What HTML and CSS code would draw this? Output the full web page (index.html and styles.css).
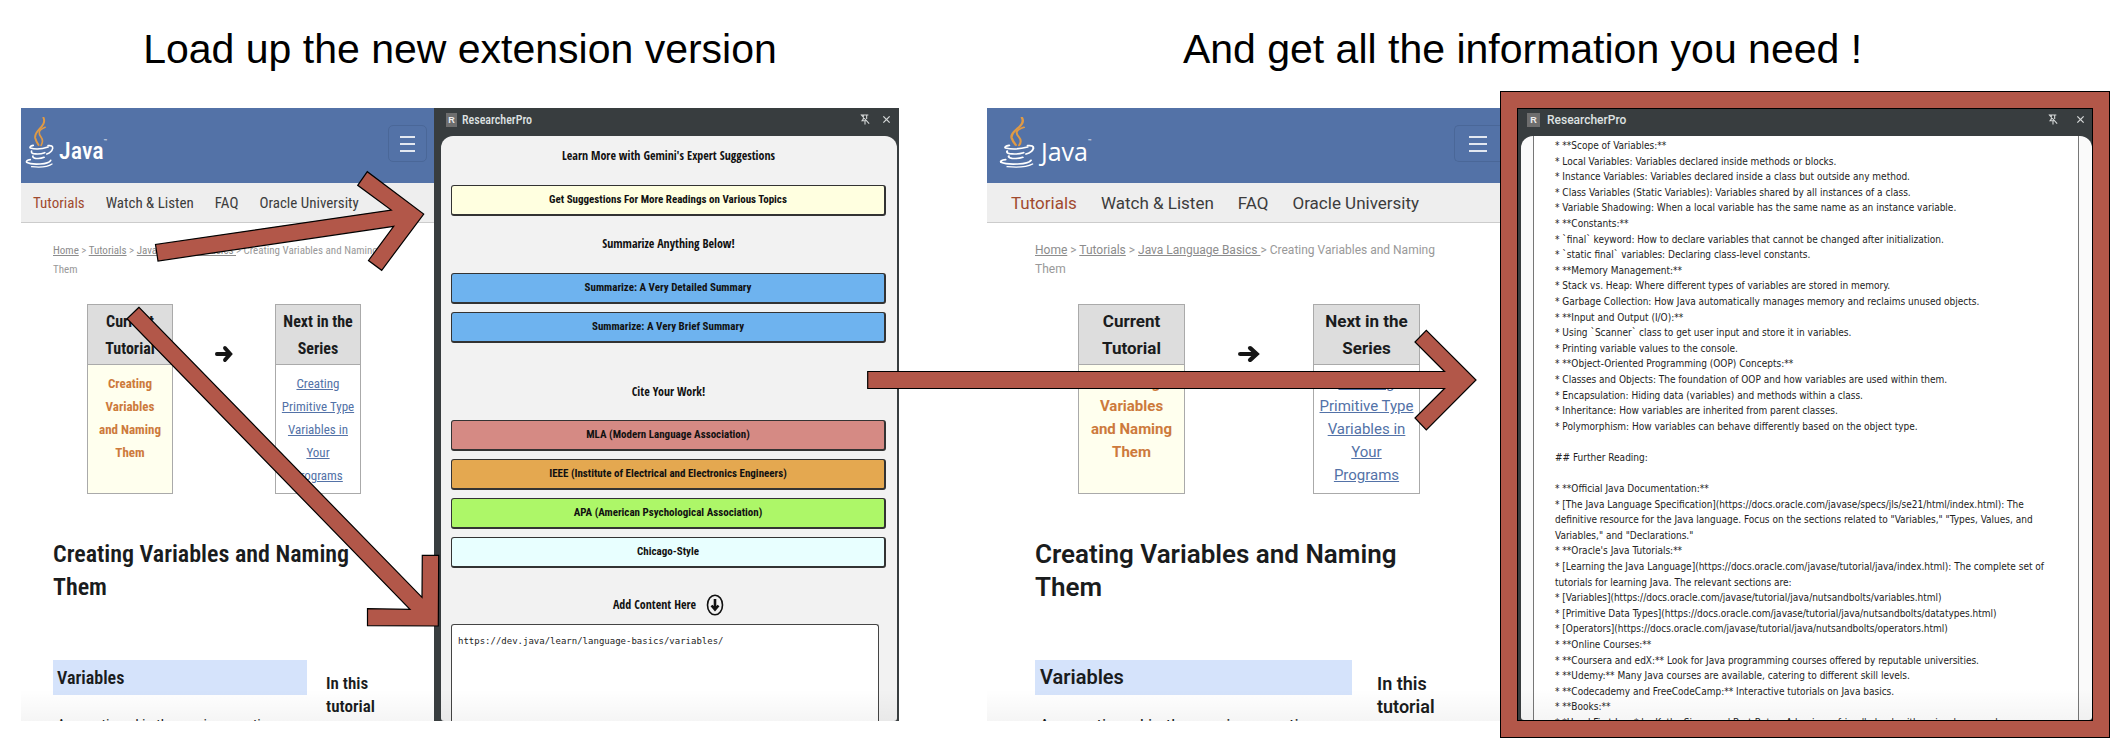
FILE: index.html
```html
<!DOCTYPE html>
<html lang="en">
<head>
<meta charset="utf-8">
<title>ResearcherPro walkthrough</title>
<link rel="stylesheet" href="styles.css">
</head>
<body>
<svg class="symbols" aria-hidden="true">
  <symbol id="cup" viewBox="72 78 88 156" preserveAspectRatio="none">
    <g fill="none" stroke="#e09a45" stroke-linecap="round">
      <path d="M128 80C140 106 98 118 103 141Q106 152 113 162" stroke-width="6"/>
      <path d="M133 109C110 118 113 128 121 139Q129 150 121 163" stroke-width="5"/>
    </g>
    <g fill="none" stroke="#fff" stroke-linecap="round" stroke-width="5">
      <path d="M97 163Q84 166 88 171Q112 178 142 168"/>
      <path d="M142 164Q157 162 156 172Q153 184 138 189"/>
      <path d="M92 180Q90 186 98 188Q116 191 132 185"/>
      <path d="M96 195Q94 200 104 202Q118 204 130 199"/>
      <path d="M88 206Q74 208 77 214Q90 221 118 219Q146 217 150 208"/>
      <path d="M92 227Q134 232 154 219" stroke-width="4"/>
    </g>
  </symbol>
  <symbol id="next" viewBox="0 0 20 18" preserveAspectRatio="none">
    <path d="M2 9H16M11 3L17 9L11 15" fill="none" stroke="#151515" stroke-width="4" stroke-linecap="round"/>
  </symbol>
  <symbol id="unpin" viewBox="0 0 12 14">
    <path d="M2 1.5H10M4 2V6.5L2.5 8.5H7M8 2V6.5M6 8.5V13M1 1L11 12" fill="none" stroke="#d5d8d8" stroke-width="1.3"/>
  </symbol>
  <symbol id="close" viewBox="0 0 10 10">
    <path d="M1.500 1.500L8.500 8.500M8.500 1.500L1.500 8.500" fill="none" stroke="#d5d8d8" stroke-width="1.400"/>
  </symbol>
</svg>
<main class="board">
  <figure class="step step-load">
    <figcaption class="title">Load up the new extension version</figcaption>
    <div class="shot">
      <section class="page narrow">
        <header class="site-head">
          <a class="logo"><svg class="cup"><use href="#cup"/></svg><span class="logo-name">Java</span><sup class="tm">™</sup></a>
          <button class="menu" aria-label="Menu"><span class="bar"></span><span class="bar"></span><span class="bar"></span></button>
        </header>
        <nav class="site-nav"><a class="current" href="#">Tutorials</a><a href="#">Watch &amp; Listen</a><a href="#">FAQ</a><a href="#">Oracle University</a></nav>
        <div class="content">
          <p class="crumbs"><a href="#">Home</a> &gt; <a href="#">Tutorials</a> &gt; <a href="#">Java Language Basics </a>&gt; Creating Variables and Naming<br>Them</p>
          <div class="series">
            <div class="card card-now"><h3>Current Tutorial</h3><p>Creating Variables<br>and Naming Them</p></div>
            <svg class="next"><use href="#next"/></svg>
            <div class="card"><h3>Next in the Series</h3><p><a href="#">Creating Primitive Type Variables in Your<br>Programs</a></p></div>
          </div>
          <h1>Creating Variables and Naming<br>Them</h1>
          <div class="article">
            <div class="text"><h2>Variables</h2><p>As mentioned in the previous section</p></div>
            <h4>In this tutorial</h4>
          </div>
        </div>
      </section>
      <section class="panel">
        <header class="panel-head"><span class="badge">R</span><span class="name">ResearcherPro</span><button class="icon" aria-label="Unpin"><svg><use href="#unpin"/></svg></button><button class="icon" aria-label="Close"><svg class="x"><use href="#close"/></svg></button></header>
        <div class="panel-body form">
          <h5>Learn More with Gemini's Expert Suggestions</h5>
          <button class="act yellow">Get Suggestions For More Readings on Various Topics</button>
          <h5>Summarize Anything Below!</h5>
          <button class="act blue">Summarize: A Very Detailed Summary</button>
          <button class="act blue">Summarize: A Very Brief Summary</button>
          <h5 class="cite">Cite Your Work!</h5>
          <button class="act red">MLA (Modern Language Association)</button>
          <button class="act orange">IEEE (Institute of Electrical and Electronics Engineers)</button>
          <button class="act green">APA (American Psychological Association)</button>
          <button class="act cyan">Chicago-Style</button>
          <label class="add" for="source">Add Content Here
            <svg class="down" viewBox="0 0 18 22" aria-hidden="true"><ellipse cx="9" cy="11" rx="7.500" ry="9.800" fill="none" stroke="#111" stroke-width="1.600"/><path d="M9 5V15M5.500 11.500L9 15.500L12.500 11.500" fill="none" stroke="#111" stroke-width="2.600"/></svg>
          </label>
          <textarea id="source" class="source" spellcheck="false">https://dev.java/learn/language-basics/variables/</textarea>
        </div>
      </section>
    </div>
  </figure>
  <figure class="step step-read">
    <figcaption class="title">And get all the information you need !</figcaption>
    <div class="shot">
      <section class="page wide">
        <header class="site-head">
          <a class="logo"><svg class="cup"><use href="#cup"/></svg><span class="logo-name">Java</span><sup class="tm">™</sup></a>
          <button class="menu" aria-label="Menu"><span class="bar"></span><span class="bar"></span><span class="bar"></span></button>
        </header>
        <nav class="site-nav"><a class="current" href="#">Tutorials</a><a href="#">Watch &amp; Listen</a><a href="#">FAQ</a><a href="#">Oracle University</a></nav>
        <div class="content">
          <p class="crumbs"><a href="#">Home</a> &gt; <a href="#">Tutorials</a> &gt; <a href="#">Java Language Basics </a>&gt; Creating Variables and Naming<br>Them</p>
          <div class="series">
            <div class="card card-now"><h3>Current Tutorial</h3><p>Creating Variables<br>and Naming Them</p></div>
            <svg class="next"><use href="#next"/></svg>
            <div class="card"><h3>Next in the Series</h3><p><a href="#">Creating Primitive Type Variables in Your<br>Programs</a></p></div>
          </div>
          <h1>Creating Variables and Naming<br>Them</h1>
          <div class="article">
            <div class="text"><h2>Variables</h2><p>As mentioned in the previous section</p></div>
            <h4>In this tutorial</h4>
          </div>
        </div>
      </section>
      <section class="panel framed">
        <header class="panel-head"><span class="badge">R</span><span class="name">ResearcherPro</span><button class="icon" aria-label="Unpin"><svg><use href="#unpin"/></svg></button><button class="icon" aria-label="Close"><svg class="x"><use href="#close"/></svg></button></header>
        <div class="panel-body reading">
          <div class="answer">* **Scope of Variables:**
* Local Variables: Variables declared inside methods or blocks.
* Instance Variables: Variables declared inside a class but outside any method.
* Class Variables (Static Variables): Variables shared by all instances of a class.
* Variable Shadowing: When a local variable has the same name as an instance variable.
* **Constants:**
* `final` keyword: How to declare variables that cannot be changed after initialization.
* `static final` variables: Declaring class-level constants.
* **Memory Management:**
* Stack vs. Heap: Where different types of variables are stored in memory.
* Garbage Collection: How Java automatically manages memory and reclaims unused objects.
* **Input and Output (I/O):**
* Using `Scanner` class to get user input and store it in variables.
* Printing variable values to the console.
* **Object-Oriented Programming (OOP) Concepts:**
* Classes and Objects: The foundation of OOP and how variables are used within them.
* Encapsulation: Hiding data (variables) and methods within a class.
* Inheritance: How variables are inherited from parent classes.
* Polymorphism: How variables can behave differently based on the object type.

## Further Reading:

* **Official Java Documentation:**
* [The Java Language Specification](https://docs.oracle.com/javase/specs/jls/se21/html/index.html): The
definitive resource for the Java language. Focus on the sections related to "Variables," "Types, Values, and
Variables," and "Declarations."
* **Oracle's Java Tutorials:**
* [Learning the Java Language](https://docs.oracle.com/javase/tutorial/java/index.html): The complete set of
tutorials for learning Java. The relevant sections are:
* [Variables](https://docs.oracle.com/javase/tutorial/java/nutsandbolts/variables.html)
* [Primitive Data Types](https://docs.oracle.com/javase/tutorial/java/nutsandbolts/datatypes.html)
* [Operators](https://docs.oracle.com/javase/tutorial/java/nutsandbolts/operators.html)
* **Online Courses:**
* **Coursera and edX:** Look for Java programming courses offered by reputable universities.
* **Udemy:** Many Java courses are available, catering to different skill levels.
* **Codecademy and FreeCodeCamp:** Interactive tutorials on Java basics.
* **Books:**
* *Head First Java* by Kathy Sierra and Bert Bates: A beginner-friendly book with a visual approach.</div>
        </div>
      </section>
    </div>
  </figure>
  <svg class="arrows" viewBox="0 0 2122 746" aria-hidden="true">
    <g fill="#b25749" stroke="#000" stroke-width="1.200">
      <path d="M155.500 244.500L158 261L393.700 226.300L368.500 260.500L381.700 270.300L423.700 214L367.300 171.700L357.700 185.300L391.300 210Z"/>
      <path d="M139 307.300L127 318.700L410 609.300L367.500 608.700V625.700L438.300 626L438.700 555.300H422.300L422 597.300Z"/>
      <path d="M867.700 371.500H1444.500L1415 342L1426.300 330.300L1476 380L1426.300 430L1415 418L1444.500 388.500H867.700Z"/>
    </g>
  </svg>
</main>
</body>
</html>
```
FILE: styles.css
```css
* { box-sizing: border-box; }
body { margin: 0; background: #fff; font-family: Roboto, sans-serif; color: #1a1c1d; }
h1, h2, h3, h4, h5, p, figure { margin: 0; }
button { font: inherit; color: inherit; padding: 0; cursor: pointer; }
.symbols { display: none; }

/* Board: two captioned screenshots with the arrows laid over them */
.board {
  position: relative;
  display: grid;
  grid-template-columns: 878fr 1123fr;
  column-gap: 88px;
  height: 100vh;
  padding: 0 12px 8px 21px;
  overflow: hidden;
}
.step { display: flex; flex-direction: column; min-height: 0; min-width: 0; }
.title {
  flex: none;
  padding-top: 24px;
  height: 91px;
  font: 41px/50px "Liberation Sans", Arial, sans-serif;
  color: #000;
  text-align: center;
}
.step-read .title { padding-right: 52px; }
.shot { flex: 1; display: grid; grid-template-rows: 100%; min-height: 0; }
.step-load .shot { grid-template-columns: 413fr 465fr; padding: 17px 0; }
.step-read .shot { grid-template-columns: 513fr 610fr; }
.arrows { position: absolute; top: 0; left: 0; width: 100%; height: auto; pointer-events: none; }

/* Tutorial page */
.page { position: relative; overflow: hidden; min-width: 0; }
.page::after, .panel-body::after {
  content: "";
  position: absolute;
  inset: auto 0 0 0;
  height: 32px;
  background: linear-gradient(rgba(0, 0, 0, 0), rgba(0, 0, 0, .04));
  pointer-events: none;
}
.wide { margin: 17px 0; }
.site-head {
  display: flex;
  align-items: flex-start;
  justify-content: space-between;
  height: 75px;
  background: #5372a7;
}
.logo { display: flex; color: #fff; padding: 9px 0 0 4px; }
.cup { width: 29px; height: 52px; }
.logo-name { margin: 16px 0 0 5px; font: 500 24px/36px "Roboto Condensed", sans-serif; }
.tm { margin-top: 20px; font-size: 6px; line-height: 8px; }
.menu {
  display: flex;
  flex-direction: column;
  align-items: center;
  justify-content: center;
  gap: 5px;
  width: 39px;
  height: 37px;
  margin: 17px 7px 0 0;
  background: none;
  border: 1px solid #4a6798;
  border-radius: 5px;
}
.bar { width: 15px; height: 2px; background: #e3e8f1; }
.site-nav {
  display: flex;
  align-items: center;
  gap: 21px;
  height: 40px;
  padding-left: 12px;
  background: #eee;
  border-bottom: 1px solid #ccc;
  font: 15px/20px "Roboto Condensed", Roboto, sans-serif;
  white-space: nowrap;
}
.site-nav a { color: #3c3c3c; text-decoration: none; }
.site-nav .current { color: #a04a2e; }
.content { padding: 18px 0 0 32px; font-family: "Roboto Condensed", Roboto, sans-serif; }
.crumbs { font-size: 11px; line-height: 19px; color: #999; white-space: nowrap; }
.crumbs a { color: #8c8c8c; }
.series { display: flex; align-items: flex-start; margin: 25px 0 0 34px; }
.card { width: 86px; height: 190px; border: 1px solid #aaa; text-align: center; }
.card h3 { height: 60px; padding-top: 3px; font-size: 16px; line-height: 27px; background: #ddd; border-bottom: 1px solid #aaa; }
.card p { padding: 7px 4px 0; font-size: 13px; line-height: 23px; }
.card a { color: #5372a7; }
.card-now { background: #ffe; }
.card-now p { color: #cd7a3c; font-weight: 700; }
.next { width: 18px; height: 18px; margin: 41px 42px 0; }
.content h1 { margin-top: 44px; font-size: 24px; line-height: 33px; font-weight: 600; }
.article { display: flex; gap: 19px; margin-top: 56px; }
.text { width: 254px; }
.text h2 { padding-left: 4px; font-size: 18px; line-height: 35px; font-weight: 600; background: #d5e3fb; }
.text p { margin: 18px 0 0 4px; font-size: 15px; line-height: 24px; white-space: nowrap; }
.article h4 { width: 64px; padding-top: 12px; font-size: 17px; line-height: 23px; font-weight: 600; }

.wide .logo { padding-left: 12px; }
.wide .cup { width: 36px; }
.wide .logo-name { margin-left: 6px; font: 500 25px/36px "Open Sans", sans-serif; }
.wide .menu { width: 46px; margin-right: 0; border-right: 0; border-radius: 5px 0 0 5px; }
.wide .bar { width: 18px; }
.wide .site-nav { gap: 24px; padding-left: 24px; font: 17px/20px Roboto, sans-serif; }
.wide .content { padding-left: 48px; font-family: Roboto, sans-serif; }
.wide .crumbs { font-size: 12px; }
.wide .series { margin-left: 43px; }
.wide .card { width: 107px; }
.wide .card h3 { font-size: 17px; }
.wide .card p { font-size: 15px; }
.wide .next { width: 22px; margin: 41px 53px 0; }
.wide .content h1 { font-size: 26px; }
.wide .article { gap: 25px; }
.wide .text { width: 317px; }
.wide .text h2 { padding-left: 5px; font-size: 20px; }
.wide .text p { font-size: 17px; }
.wide .article h4 { font-size: 18px; }

/* Extension side panel */
.panel { display: flex; flex-direction: column; min-width: 0; min-height: 0; background: #383d3f; }
.panel-head { flex: none; display: flex; align-items: center; height: 28px; padding: 0 8px 5px 12px; color: #dfe2e2; }
.badge { width: 11px; height: 14px; background: #6e6e6e; color: #eee; font: 700 9px/14px "Liberation Sans", sans-serif; text-align: center; }
.name { flex: 1; margin-left: 5px; font: 500 12px/16px "Roboto Condensed", Roboto, sans-serif; }
.icon { display: flex; background: none; border: 0; margin-left: 12px; }
.icon svg { width: 10px; height: 13px; }
.icon .x { width: 9px; height: 13px; }
.panel-body { position: relative; flex: 1; min-height: 0; overflow: hidden; border-radius: 12px 12px 3px 3px; }
.form {
  display: flex;
  flex-direction: column;
  gap: 8px;
  margin: 0 2px 0 7px;
  padding: 0 11px 0 10px;
  background: #f2f2f2;
}
.form h5 { flex: none; padding-top: 10px; height: 41px; font: 700 12px/20px "Open Sans Condensed", "DejaVu Sans Condensed", sans-serif; color: #111; text-align: center; }
.form .cite { padding-top: 31px; height: 61px; }
.act {
  flex: none;
  height: 31px;
  border: 1px solid #333;
  border-right-width: 2px;
  border-bottom-width: 2px;
  border-radius: 3px;
  color: #111;
  font: 700 11px/16px "Roboto Condensed", "Liberation Sans", sans-serif;
}
.yellow { background: #ffffe0; }
.blue { background: #6eb3ef; }
.red { background: #d58a84; }
.orange { background: #e4a850; }
.green { background: #adf768; }
.cyan { background: #e8ffff; }
.add {
  flex: none;
  display: flex;
  align-items: center;
  justify-content: center;
  gap: 10px;
  margin-top: 18px;
  font: 700 12px/22px "Open Sans Condensed", "DejaVu Sans Condensed", sans-serif;
  color: #111;
}
.down { width: 18px; height: 22px; }
.source {
  flex: 1;
  margin-right: 7px;
  padding: 8px 6px;
  border: 1px solid #444;
  border-bottom: 0;
  border-radius: 3px 3px 0 0;
  background: #fff;
  color: #222;
  font: 9px/16px "DejaVu Sans Mono", monospace;
  resize: none;
}

.framed { border: 17px solid #b25749; outline: 1px solid #000; outline-offset: -1px; box-shadow: inset 0 0 0 1px #000; }
.framed .panel-head { padding-left: 10px; }
.framed .badge { width: 13px; }
.framed .name { margin-left: 7px; font-family: Roboto, sans-serif; }
.framed .icon { margin-left: 18px; }
.reading { margin: 0 1px 1px 4px; padding: 0 13px 0 12px; background: #fafafa; }
.answer {
  padding: 2px 0 0 21px;
  border: solid #777;
  border-width: 0 1px;
  background: #fff;
  color: #222;
  font: 10px/1.56 "DejaVu Sans Condensed", "DejaVu Sans", sans-serif;
  white-space: pre;
}
```
